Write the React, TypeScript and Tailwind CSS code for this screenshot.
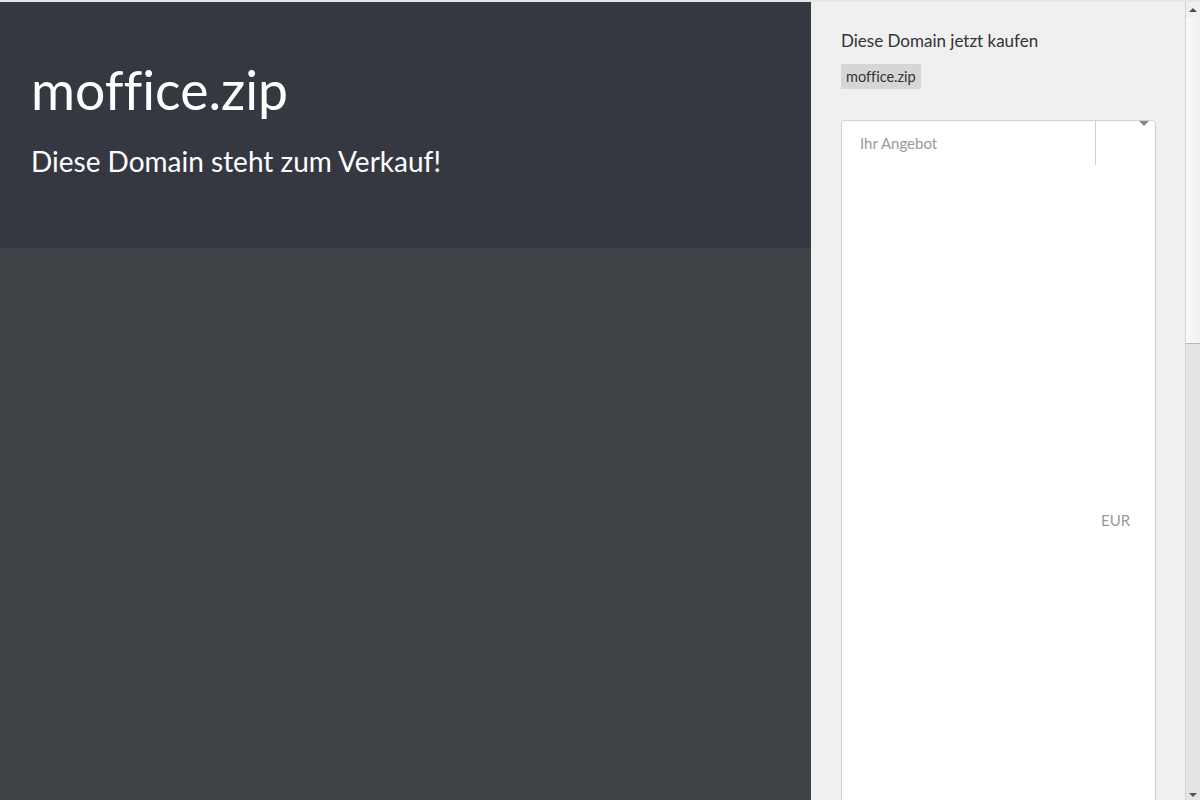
import React from "react";

function Scrollbar() {
  return (
    <div className="flex h-[800px] w-[15px] shrink-0 flex-col border-l border-[#d4d4d4] bg-[#e4e4e4]">
      <div className="flex h-[15px] items-center justify-center bg-[#f0f0f0]">
        <div className="h-0 w-0 border-x-[4px] border-b-[4px] border-x-transparent border-b-[#505050]" />
      </div>
      <div className="h-[327px] border-b border-[#b8b8b8] bg-gradient-to-r from-[#fafafa] to-[#f0f0f0]" />
      <div className="flex-1" />
      <div className="flex h-[15px] items-center justify-center bg-[#e4e4e4]">
        <div className="h-0 w-0 border-x-[4px] border-t-[4px] border-x-transparent border-t-[#505050]" />
      </div>
    </div>
  );
}

export default function App() {
  return (
    <div
      className="flex h-[800px] w-full overflow-hidden border-t-2 border-[#e6e6e6] [font-variant-ligatures:none]"
      style={{ fontFamily: "Lato, 'Noto Sans', sans-serif" }}
    >
      <div className="flex w-[811px] shrink-0 flex-col bg-[#3f4247]">
        <div className="h-[246px] shrink-0 bg-[#353841] px-[31px] pt-[58px] text-white">
          <h1 className="text-[53.5px] leading-[1.1] font-normal">moffice.zip</h1>
          <p className="mt-[25px] text-[28px] leading-tight">Diese Domain steht zum Verkauf!</p>
        </div>
        <div className="flex-1" />
      </div>
      <div className="flex-1 bg-[#f0f0f0] pl-[30px] pr-[29px] pt-[27px]">
        <h2 className="text-[17px] leading-[24px] text-[#333]">Diese Domain jetzt kaufen</h2>
        <div className="mt-[11px] inline-block bg-[#d6d6d6] px-[5px] py-[3px] text-[14.5px] leading-[19px] text-[#333]">
          moffice.zip
        </div>
        <div className="relative mt-[31px] flex h-[800px] rounded-t-[4px] border border-[#d0d0d0] bg-white">
          <div className="flex h-[44px] flex-1 items-center border-r border-[#d0d0d0] pl-[18px] text-[15px] text-[#999]">
            Ihr Angebot
          </div>
          <div className="flex w-[59px] items-center pl-[5px] text-[15px] text-[#999]">EUR</div>
          <div className="absolute right-[6px] top-0 h-0 w-0 border-x-[5px] border-t-[5px] border-x-transparent border-t-[#888]" />
        </div>
      </div>
      <Scrollbar />
    </div>
  );
}
